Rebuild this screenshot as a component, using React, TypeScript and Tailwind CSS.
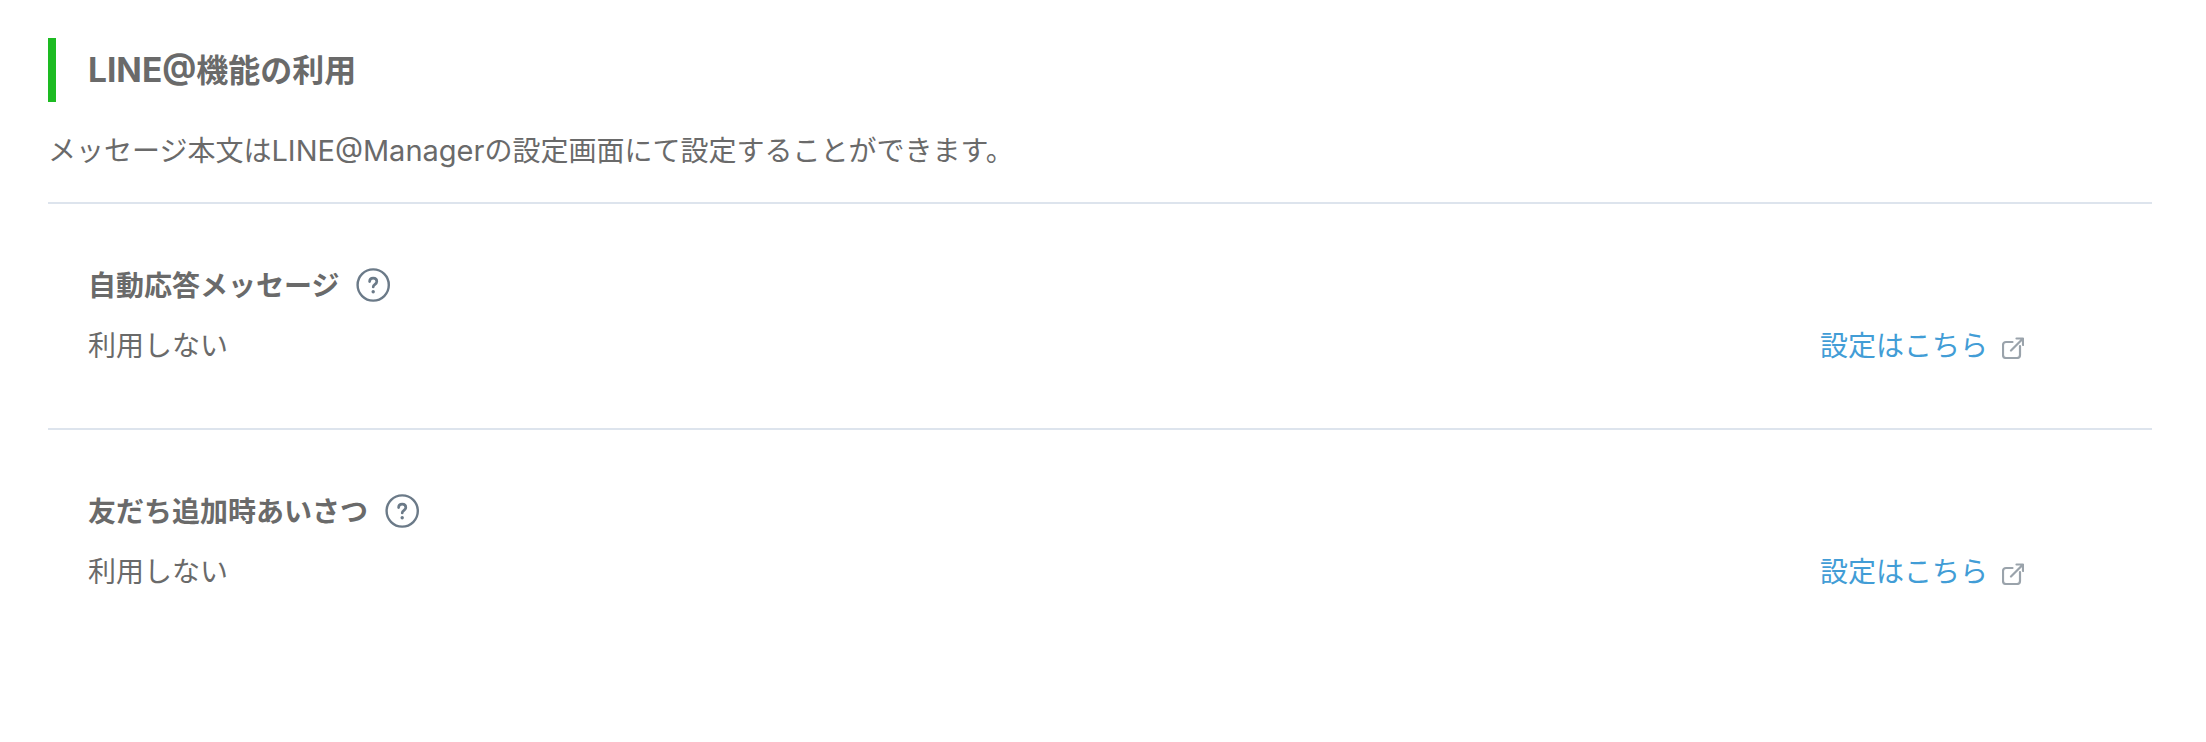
const SETTINGS = [
  { title: '自動応答メッセージ', value: '利用しない' },
  { title: '友だち追加時あいさつ', value: '利用しない' },
]

function HelpIcon() {
  return (
    <svg
      className="mb-0.5 ml-4 h-9 w-9 shrink-0"
      viewBox="0 0 36 36"
      fill="none"
      stroke="#6b7a88"
      strokeLinecap="round"
      strokeLinejoin="round"
    >
      <circle cx="18.2" cy="18" r="15.6" strokeWidth="2.4" />
      <path d="M14.6 14.6c0-2 1.4-3.4 3.6-3.4s3.6 1.4 3.6 3.3c0 2.8-3.6 2.9-3.6 5.5" strokeWidth="2.7" />
      <circle cx="18.2" cy="24.8" r="1.7" fill="#6b7a88" stroke="none" />
    </svg>
  )
}

function ExternalIcon() {
  return (
    <svg
      className="mt-1 ml-[14px] h-[22px] w-[22px] shrink-0"
      viewBox="0 0 22 22"
      fill="none"
      stroke="#9aa3ab"
      strokeWidth="2.2"
      strokeLinejoin="round"
      strokeLinecap="round"
    >
      <path d="M10.5 5H4a3 3 0 0 0-3 3v10a3 3 0 0 0 3 3h11a3 3 0 0 0 3-3V9" />
      <path d="M9 13.5L20.5 2M14.5 1.5h6.5v6.5" />
    </svg>
  )
}

export default function App() {
  return (
    <div className="min-h-screen bg-white pt-[38px] pr-[54px] pl-12 font-[Inter,'Noto_Sans_CJK_JP',sans-serif] text-[28px] leading-10 text-[#6a6a6a]">
      <h2 className="flex h-16 items-center border-l-8 border-[#1dbb22] pl-8 text-[32px] font-bold">
        <span>
          <span className="text-[33.5px]">LINE@</span>機能の利用
        </span>
      </h2>
      <p className="mt-[29px] mb-[31px] h-10">
        メッセージ本文は<span className="text-[29px]">LINE@Manager</span>の設定画面にて設定することができます。
      </p>
      {SETTINGS.map((item) => (
        <section key={item.title} className="h-[226px] border-t-2 border-[#dde4ed] pt-[62px] pr-[128px] pl-10">
          <h3 className="flex h-10 items-center font-bold">
            {item.title}
            <HelpIcon />
          </h3>
          <div className="mt-5 flex justify-between">
            <span>{item.value}</span>
            <a href="#" className="flex items-center text-[#429dd6]">
              設定はこちら
              <ExternalIcon />
            </a>
          </div>
        </section>
      ))}
    </div>
  )
}
